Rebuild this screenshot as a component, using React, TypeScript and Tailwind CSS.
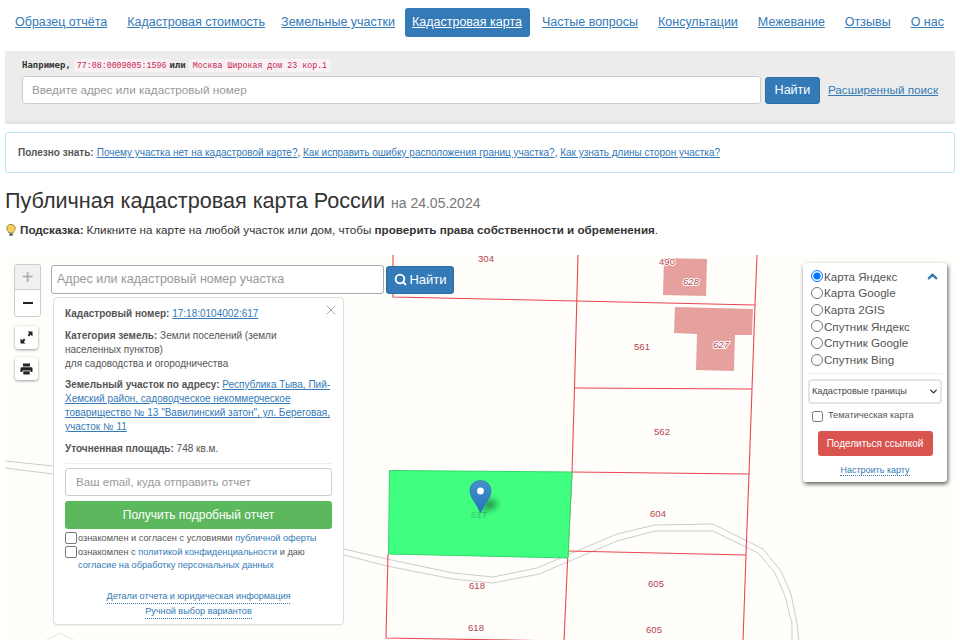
import { ChevronDown, ChevronUp, Search, X } from 'lucide-react';

const navItems = [
  { label: 'Образец отчёта', cls: 'px-[10px] text-[#337ab7]' },
  { label: 'Кадастровая стоимость', cls: 'px-[10px] text-[#337ab7]' },
  { label: 'Земельные участки', cls: '-ml-[4px] px-[10px] text-[#337ab7]' },
  { label: 'Кадастровая карта', cls: 'pl-[7px] pr-[8px] rounded-[3px] bg-[#337ab7] text-white' },
  { label: 'Частые вопросы', cls: 'ml-[2px] px-[10px] text-[#337ab7]' },
  { label: 'Консультации', cls: 'px-[10px] text-[#337ab7]' },
  { label: 'Межевание', cls: 'px-[10px] text-[#337ab7]' },
  { label: 'Отзывы', cls: 'px-[10px] text-[#337ab7]' },
  { label: 'О нас', cls: 'px-[10px] text-[#337ab7]' },
];

const layers = ['Карта Яндекс', 'Карта Google', 'Карта 2GIS', 'Спутник Яндекс', 'Спутник Google', 'Спутник Bing'];

const parcelLabels = [
  { x: 486, y: 261, text: '304' },
  { x: 642, y: 349, text: '561' },
  { x: 662, y: 433.5, text: '562' },
  { x: 658, y: 516, text: '604' },
  { x: 477, y: 587.5, text: '618' },
  { x: 476, y: 629.5, text: '618' },
  { x: 656, y: 586, text: '605' },
  { x: 654, y: 631.5, text: '605' },
];

const haloLabels = [
  { x: 667, y: 264, text: '490', italic: false },
  { x: 691, y: 284, text: '628', italic: true },
  { x: 721, y: 347, text: '627', italic: true },
];

const MapLayer = () => (
  <svg className="absolute inset-0 w-full h-full" viewBox="5 254 950 386">
    <defs>
      <linearGradient id="pin" x1="0" y1="0" x2="0" y2="1">
        <stop offset="0" stopColor="#4a90cc" />
        <stop offset="1" stopColor="#1f74bd" />
      </linearGradient>
    </defs>
    {/* roads */}
    <g fill="none" stroke="#cdcdcd" strokeWidth="1">
      <polyline points="5,460 53,465 344,548 387,558 453,572 493,576 537,567 617,533 655,524 713,523 763,548 781,570 791,593 797,622 799,640" />
      <polyline points="5,467 53,473 344,554 387,565 453,578 493,582 539,573 617,540 655,530 713,530 758,552 775,572 785,595 792,623 792,640" />
    </g>
    <polyline points="45,640 60,632 75,640" fill="none" stroke="#eeeeea" strokeWidth="1.5" />
    {/* buildings */}
    <polygon points="664,257 707,258 706,295 663,294" fill="#e6a09d" />
    <polygon points="675,306 753,308 752,334 735,334 734,370 696,369 697,333 674,332" fill="#e6a09d" />
    {/* parcel borders */}
    <g fill="none" stroke="#ea4650" strokeWidth="1.1">
      <polyline points="393,254 393,296 577,300 755,304" />
      <polyline points="578,254 574.500,387 572,471 568,550 564,640" />
      <polyline points="757,254 755,304 752,388 749,473 746,554 743,640" />
      <polyline points="574,387 752,388" />
      <polyline points="572,471 749,473" />
      <polyline points="568,550 746,554" />
      <polyline points="388,553 386,637 564,640" />
    </g>
    <polygon points="389.500,469.500 572,471 568,557 388.500,553" fill="#40ff80" stroke="#35d66b" strokeWidth="1" />
    {parcelLabels.map((l) => (
      <text key={l.text + l.y} x={l.x} y={l.y} fill="#b5454f" fontSize="9.500" textAnchor="middle" fontFamily="'Liberation Sans', sans-serif">
        {l.text}
      </text>
    ))}
    {haloLabels.map((l) => (
      <text
        key={l.text}
        x={l.x}
        y={l.y}
        fill="#b5454f"
        stroke="#fff"
        strokeWidth="2"
        paintOrder="stroke"
        fontSize="9.500"
        textAnchor="middle"
        fontStyle={l.italic ? 'italic' : 'normal'}
        fontFamily="'Liberation Sans', sans-serif"
      >
        {l.text}
      </text>
    ))}
    <text x="479" y="516.500" fill="#35c76a" fontSize="9.500" textAnchor="middle" fontFamily="'Liberation Sans', sans-serif">617</text>
    {/* pin */}
    <polygon points="481,512 486,498 496,499 497,506" fill="#000" opacity="0.4" style={{ filter: 'blur(3px)' }} />
    <path d="M480.500 512 C477 503 470 497 470 490 C470 483 475 479.500 480.500 479.500 C486 479.500 491 483 491 490 C491 497 484 503 480.500 512 Z" fill="url(#pin)" stroke="#2b6ca3" strokeWidth="0.6" />
    <circle cx="480.500" cy="490" r="3.400" fill="#fff" />
  </svg>
);

export default function App() {
  return (
    <div className="w-[960px] h-[640px] overflow-hidden bg-white text-[#333] font-['Liberation_Sans',Arial,sans-serif]">
      <nav className="flex items-start h-[51px] pl-[5px] pt-[8px]">
        {navItems.map((item) => (
          <a key={item.label} className={`h-[29px] leading-[29px] text-[12.500px] underline whitespace-nowrap ${item.cls}`}>
            {item.label}
          </a>
        ))}
      </nav>

      <section className="mx-[5px] h-[73px] bg-[#ececec] border-b-[3px] border-[#e4e4e4] px-[17px] pt-[8px]">
        <div className="flex items-center h-[13px] text-[9px] font-bold font-['DejaVu_Sans_Mono',monospace] text-[#333]">
          <span>Например,</span>
          <code className="ml-[3px] px-[3px] leading-[13px] bg-[#f9f2f4] rounded-[2px] text-[#c7254e] font-normal text-[8.300px]">77:08:0009005:1596</code>
          <span>или</span>
          <code className="ml-[3px] px-[4px] leading-[13px] bg-[#f9f2f4] rounded-[2px] text-[#c7254e] font-normal text-[8.300px]">Москва Широкая дом 23 кор.1</code>
        </div>
        <div className="flex items-center mt-[4px]">
          <div className="w-[739px] h-[28px] bg-white border border-[#ccc] rounded-[3px] pl-[9px] text-[11.700px] leading-[26px] text-[#999]">
            Введите адрес или кадастровый номер
          </div>
          <button className="ml-[4px] w-[55px] h-[27px] bg-[#337ab7] border border-[#2e6da4] rounded-[3px] text-white text-[12.500px]">Найти</button>
          <a className="ml-[8px] text-[11.700px] text-[#337ab7] underline whitespace-nowrap">Расширенный поиск</a>
        </div>
      </section>

      <section className="mx-[5px] mt-[8px] h-[41px] border border-[#bce8f1] rounded-[3px] pl-[12px] flex items-center text-[10px]">
        <b className="text-[#555] mr-[3px]">Полезно знать:</b>
        <a className="text-[#337ab7] underline">Почему участка нет на кадастровой карте?</a>
        <span className="text-[#555]">,&nbsp;</span>
        <a className="text-[#337ab7] underline">Как исправить ошибку расположения границ участка?</a>
        <span className="text-[#555]">,&nbsp;</span>
        <a className="text-[#337ab7] underline">Как узнать длины сторон участка?</a>
      </section>

      <h1 className="mx-[5px] mt-[13px] h-[29px] leading-[29px] text-[21.600px] font-normal text-[#333]">
        Публичная кадастровая карта России <small className="text-[14px] text-[#777]">на 24.05.2024</small>
      </h1>

      <p className="mx-[5px] mt-[5px] h-[20px] flex items-center text-[11.670px] text-[#333] whitespace-nowrap">
        <svg width="10" height="14" viewBox="0 0 11 14" className="ml-[1px] mr-[4px]">
          <path d="M5.500 .8 C8.300 .8 10.200 2.800 10.200 5.200 C10.200 7.400 8.300 8.300 7.800 10.300 L3.200 10.300 C2.700 8.300 .8 7.400 .8 5.200 C.8 2.800 2.700 .8 5.500 .8 Z" fill="#f6cf57" stroke="#7a6a30" strokeWidth="0.8" />
          <rect x="3.500" y="10.800" width="4" height="2.500" rx="1" fill="#555" />
        </svg>
        <b className="mr-[3px]">Подсказка:</b> Кликните на карте на любой участок или дом, чтобы&nbsp;<b>проверить права собственности и обременения</b>.
      </p>

      <section className="relative mx-[5px] mt-[15px] h-[386px] bg-[#fffefa] overflow-hidden">
        <MapLayer />

        {/* zoom */}
        <div className="absolute left-[9px] top-[9px] w-[27px] flex flex-col rounded-[3px] border border-[#ccc] bg-white overflow-hidden">
          <div className="h-[25px] bg-[#f0f0f0] border-b border-[#ccc] flex items-center justify-center text-[#aaa] text-[20px] leading-none">+</div>
          <div className="h-[26px] flex items-center justify-center">
            <div className="w-[10px] h-[2px] bg-[#222]" />
          </div>
        </div>
        <button className="absolute left-[10px] top-[71px] w-[23px] h-[23px] rounded-[3px] bg-white shadow-[0_1px_3px_rgba(0,0,0,0.4)] flex items-center justify-center">
          <svg width="13" height="13" viewBox="0 0 13 13" fill="#222">
            <polygon points="7.500,0.500 12.500,0.500 12.500,5.500 10.700,3.700 9,5.400 7.600,4 9.300,2.300" />
            <polygon points="5.500,12.500 0.500,12.500 0.500,7.500 2.300,9.300 4,7.600 5.400,9 3.700,10.700" />
          </svg>
        </button>
        <button className="absolute left-[10px] top-[102px] w-[23px] h-[23px] rounded-[3px] bg-white shadow-[0_1px_3px_rgba(0,0,0,0.4)] flex items-center justify-center">
          <svg width="13" height="12" viewBox="0 0 13 12" fill="#222">
            <path d="M3 0.500 H10 V3.500 H3 Z" />
            <path d="M1.500 4.300 H11.500 A1 1 0 0 1 12.500 5.300 V9 H10.500 V7.500 H2.500 V9 H0.500 V5.300 A1 1 0 0 1 1.500 4.300 Z" />
            <path d="M3.300 8.300 H9.700 V11.500 H3.300 Z" />
          </svg>
        </button>

        {/* search */}
        <div className="absolute left-[46px] top-[10px] flex items-center">
          <div className="w-[333px] h-[29px] bg-white border border-[#aaa] rounded-[3px] pl-[5px] text-[12.500px] leading-[27px] text-[#999]">
            Адрес или кадастровый номер участка
          </div>
          <button className="ml-[2px] w-[68px] h-[28px] bg-[#337ab7] border border-[#2e6da4] rounded-[3px] text-white text-[13px] flex items-center justify-center gap-[2px] pl-[1px]">
            <Search size={13} strokeWidth={3.500} />
            Найти
          </button>
        </div>

        {/* parcel card */}
        <div className="absolute left-[48px] top-[42px] w-[291px] h-[328px] bg-white border border-[#ddd] rounded-[4px] shadow-[0_1px_1px_rgba(0,0,0,0.05)] px-[11px] pt-[9px] text-[10px] leading-[14px] text-[#555]">
          <X size={16} strokeWidth={1.500} color="#aaa" className="absolute right-[4px] top-[4px]" />
          <p><b>Кадастровый номер:</b> <a className="text-[#337ab7] underline">17:18:0104002:617</a></p>
          <p className="mt-[8px]"><b>Категория земель:</b> Земли поселений (земли<br />населенных пунктов)<br />для садоводства и огородничества</p>
          <p className="mt-[7px]"><b>Земельный участок по адресу:</b> <a className="text-[#337ab7] underline">Республика Тыва, Пий-Хемский район, садоводческое некоммерческое товарищество № 13 "Вавилинский затон", ул. Береговая, участок № 11</a></p>
          <p className="mt-[8px]"><b>Уточненная площадь:</b> 748 кв.м.</p>
          <div className="mt-[7px] border-t border-[#eee]" />
          <div className="mt-[4px] h-[28px] border border-[#ccc] rounded-[3px] pl-[10px] text-[11.600px] leading-[26px] text-[#999]">Ваш email, куда отправить отчет</div>
          <button className="mt-[5px] w-full h-[28px] rounded-[3px] bg-[#5cb85c] text-white text-[12px]">Получить подробный отчет</button>
          <div className="mt-[2px] flex items-center h-[14px] text-[9.200px] text-[#555]">
            <span className="w-[12px] h-[12px] mr-[1px] border border-[#777] rounded-[2px] bg-white" />
            ознакомлен и согласен с условиями&nbsp;<a className="text-[#337ab7]">публичной оферты</a>
          </div>
          <div className="flex items-center h-[13px] text-[9.200px] text-[#555]">
            <span className="w-[12px] h-[12px] mr-[1px] border border-[#777] rounded-[2px] bg-white" />
            ознакомлен с&nbsp;<a className="text-[#337ab7]">политикой конфиденциальности</a>&nbsp;и даю
          </div>
          <div className="pl-[13px] h-[15px] leading-[15px] text-[9.200px] text-[#337ab7]">согласие на обработку персональных данных</div>
          <div className="mt-[17px] flex flex-col items-center gap-[1px] text-[9.150px] leading-[13px] text-[#337ab7]">
            <a className="border-b border-dotted border-[#337ab7]">Детали отчета и юридическая информация</a>
            <a className="border-b border-dotted border-[#337ab7]">Ручной выбор вариантов</a>
          </div>
        </div>

        {/* layers */}
        <div className="absolute right-[8px] top-[8px] w-[144px] h-[219px] bg-white rounded-[3px] shadow-[1px_2px_4px_rgba(0,0,0,0.65)] px-[5px] pt-[5px] text-[#555]">
          <ChevronUp size={15} strokeWidth={3.500} color="#337ab7" className="absolute right-[7px] top-[6px]" />
          {layers.map((l, i) => (
            <label key={l} className="flex items-center h-[16.700px] text-[11.600px]">
              <input type="radio" name="layer" defaultChecked={i === 0} className="w-[12px] h-[12px] ml-[3px] mr-[1px] accent-[#0075ff]" />
              {l}
            </label>
          ))}
          <div className="mt-[5px] border-t border-[#eee]" />
          <div className="mt-[5px] h-[25px] border-2 border-[#e4e4e4] rounded-[4px] pl-[2px] pr-[1px] flex items-center justify-between text-[9.200px] text-[#444]">
            Кадастровые границы
            <ChevronDown size={11} strokeWidth={3} color="#333" />
          </div>
          <label className="flex items-center mt-[5px] h-[14px] text-[9.200px] text-[#555]">
            <input type="checkbox" className="w-[11px] h-[11px] ml-[4px] mr-[5px]" />
            Тематическая карта
          </label>
          <button className="block mx-auto mt-[8px] w-[115px] h-[25px] rounded-[3px] bg-[#d9534f] text-white text-[10px]">Поделиться ссылкой</button>
          <div className="mt-[8px] text-center text-[9px] leading-[12px] text-[#337ab7]">
            <a className="border-b border-dotted border-[#337ab7]">Настроить карту</a>
          </div>
        </div>
      </section>
    </div>
  );
}
